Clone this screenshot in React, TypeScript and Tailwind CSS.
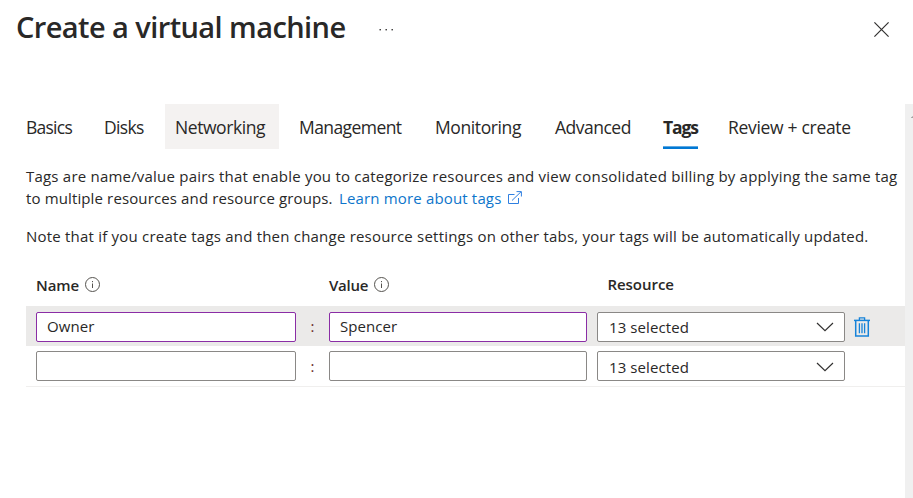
const tabs = [
  { label: "Basics", box: "w-[68px]", text: "tracking-[-0.75px]" },
  { label: "Disks", box: "w-[61px]", text: "tracking-[-0.65px]" },
  { label: "Networking", box: "w-[114px] bg-[#f4f2f1]", text: "tracking-[-0.42px]" },
  { label: "Management", box: "w-[126px]", text: "tracking-[-0.58px]" },
  { label: "Monitoring", box: "w-[110px]", text: "tracking-[-0.4px]" },
  { label: "Advanced", box: "w-[98px]", text: "tracking-[-0.5px]" },
  { label: "Tags", box: "w-[55px]", text: "tracking-[-1.1px] font-bold", active: true },
  { label: "Review + create", box: "w-[142px]", text: "tracking-[-0.31px]" },
];

const rows = [
  { name: "Owner", value: "Spencer", selected: true },
  { name: "", value: "", selected: false },
];

function InfoIcon() {
  return (
    <svg width="16" height="16" viewBox="0 0 16 16" fill="none" stroke="#55534f">
      <circle cx="7.5" cy="7.5" r="7" />
      <path d="M7.5 6.5V11M7.5 4V5.2" />
    </svg>
  );
}

function Chevron() {
  return (
    <svg width="18" height="10" viewBox="0 0 18 10" fill="none" stroke="#323130" strokeWidth="1.2">
      <path d="M1 1L9 8.6L17 1" />
    </svg>
  );
}

function TrashIcon() {
  return (
    <svg width="16" height="20" viewBox="0 0 16 20" fill="none" stroke="#1683d9">
      <path d="M0 3.4H16" strokeWidth="1.5" />
      <path d="M5.4 3V.8H10.6V3" strokeWidth="1.3" />
      <path d="M1.7 4V19H14.3V4" strokeWidth="1.5" />
      <path d="M5.4 6.3V16.3M8 6.3V16.3M10.6 6.3V16.3" strokeWidth="1.3" />
    </svg>
  );
}

function TagInput({ text, selected, width }: { text: string; selected: boolean; width: string }) {
  return (
    <div
      className={`${width} flex h-[30px] items-center rounded-[2px] border bg-white pl-2.5 pb-[2px] tracking-[0.07px] ${
        selected ? "border-[#8a2da5]" : "border-[#8a8886]"
      }`}
    >
      {text}
    </div>
  );
}

export default function App() {
  return (
    <div className="flex h-[498px] w-[913px] flex-col overflow-hidden bg-white font-['Open_Sans','Noto_Sans',sans-serif] text-[15px] leading-[22px] text-[#292827]">
      <header className="flex h-[104px] items-start justify-between pl-4 pr-6">
        <div className="flex">
          <h1 className="w-[362px] whitespace-nowrap pt-[7px] text-[29px] font-semibold leading-[40px] tracking-[-0.58px]">
            Create a virtual machine
          </h1>
          <svg className="mt-7" width="16" height="3" viewBox="0 0 16 3" fill="#323130">
            <rect x="1.5" y="1" width="1.4" height="1.4" />
            <rect x="7.5" y="1" width="1.4" height="1.4" />
            <rect x="13.5" y="1" width="1.4" height="1.4" />
          </svg>
        </div>
        <svg className="mt-[22px]" width="15" height="15" viewBox="0 0 15 15" fill="none" stroke="#323130" strokeWidth="1.2">
          <path d="M.4 .4L14.6 14.6M14.6 .4L.4 14.6" />
        </svg>
      </header>

      <div className="flex grow">
        <main className="w-[905px]">
          <nav className="flex gap-2.5 pl-4">
            {tabs.map((tab) => (
              <div key={tab.label} className={`${tab.box} flex h-[45px] flex-col justify-between px-2.5 pt-[11px]`}>
                <span className={`${tab.text} whitespace-nowrap text-[17.5px] leading-6`}>{tab.label}</span>
                {tab.active && <span className="h-[3px] border-t border-[#5fa9e2] bg-[#0078d4]" />}
              </div>
            ))}
          </nav>

          <div className="whitespace-nowrap pl-[26px] pt-4 leading-[22px]">
            <p className="tracking-[0.211px]">
              Tags are name/value pairs that enable you to categorize resources and view consolidated billing by applying the same tag
            </p>
            <p className="flex">
              <span className="w-[313px] tracking-[0.13px]">to multiple resources and resource groups.</span>
              <span className="w-[169px] tracking-[0.16px] text-[#0d75cb]">Learn more about tags</span>
              <svg className="mt-[4px]" width="14" height="14" viewBox="0 0 14 14" fill="none" stroke="#2f7fe0">
                <path d="M6.5 3.5H.5V12.5H10.5V7" />
                <path d="M4 9.5L13 .8M8.5 .6H13.4V5.5" />
              </svg>
            </p>
            <p className="pt-4 tracking-[0.211px]">
              Note that if you create tags and then change resource settings on other tabs, your tags will be automatically updated.
            </p>
          </div>

          <div className="flex h-[59px] whitespace-nowrap pl-9 pt-[27px] font-semibold">
            <div className="flex w-[293px] gap-1">
              <span className="w-[45px] tracking-[-0.05px]">Name</span>
              <span className="pt-[3px]"><InfoIcon /></span>
            </div>
            <div className="flex w-[278px] gap-1">
              <span className="w-[41px] tracking-[-0.25px]">Value</span>
              <span className="pt-[3px]"><InfoIcon /></span>
            </div>
            <div className="-mt-px pl-[0.5px] tracking-[-0.05px]">Resource</div>
          </div>

          <div className="ml-[26px]">
            {rows.map((row, i) => (
              <div
                key={i}
                className={`flex pl-2.5 ${row.selected ? "h-10 bg-[#ebeae9] pt-1.5" : "h-[41px] border-b border-[#f0efee] pt-[5px]"}`}
              >
                <TagInput text={row.name} selected={row.selected} width="w-[260px]" />
                <div className={`w-[33px] text-center text-[#6b2b2b] ${row.selected ? "pt-[3px]" : "pt-1"}`}>:</div>
                <TagInput text={row.value} selected={row.selected} width="w-[258px]" />
                <div
                  className={`ml-2.5 flex h-[30px] w-[248px] items-center justify-between rounded-[2px] border border-[#8a8886] bg-white pl-[11px] pr-2.5 ${
                    row.selected ? "" : "pt-[2px]"
                  }`}
                >
                  <span className="tracking-[0.1px]">13 selected</span>
                  <Chevron />
                </div>
                {row.selected && (
                  <div className="ml-[9px] pt-[5px]">
                    <TrashIcon />
                  </div>
                )}
              </div>
            ))}
          </div>
        </main>
        <aside className="w-2 bg-[#f0f0f0] pl-1.5 pt-3">
          <svg width="2" height="2" viewBox="0 0 2 2" fill="#a3a3a3">
            <path d="M0 1.5L2 0V2H0Z" />
          </svg>
        </aside>
      </div>
    </div>
  );
}
